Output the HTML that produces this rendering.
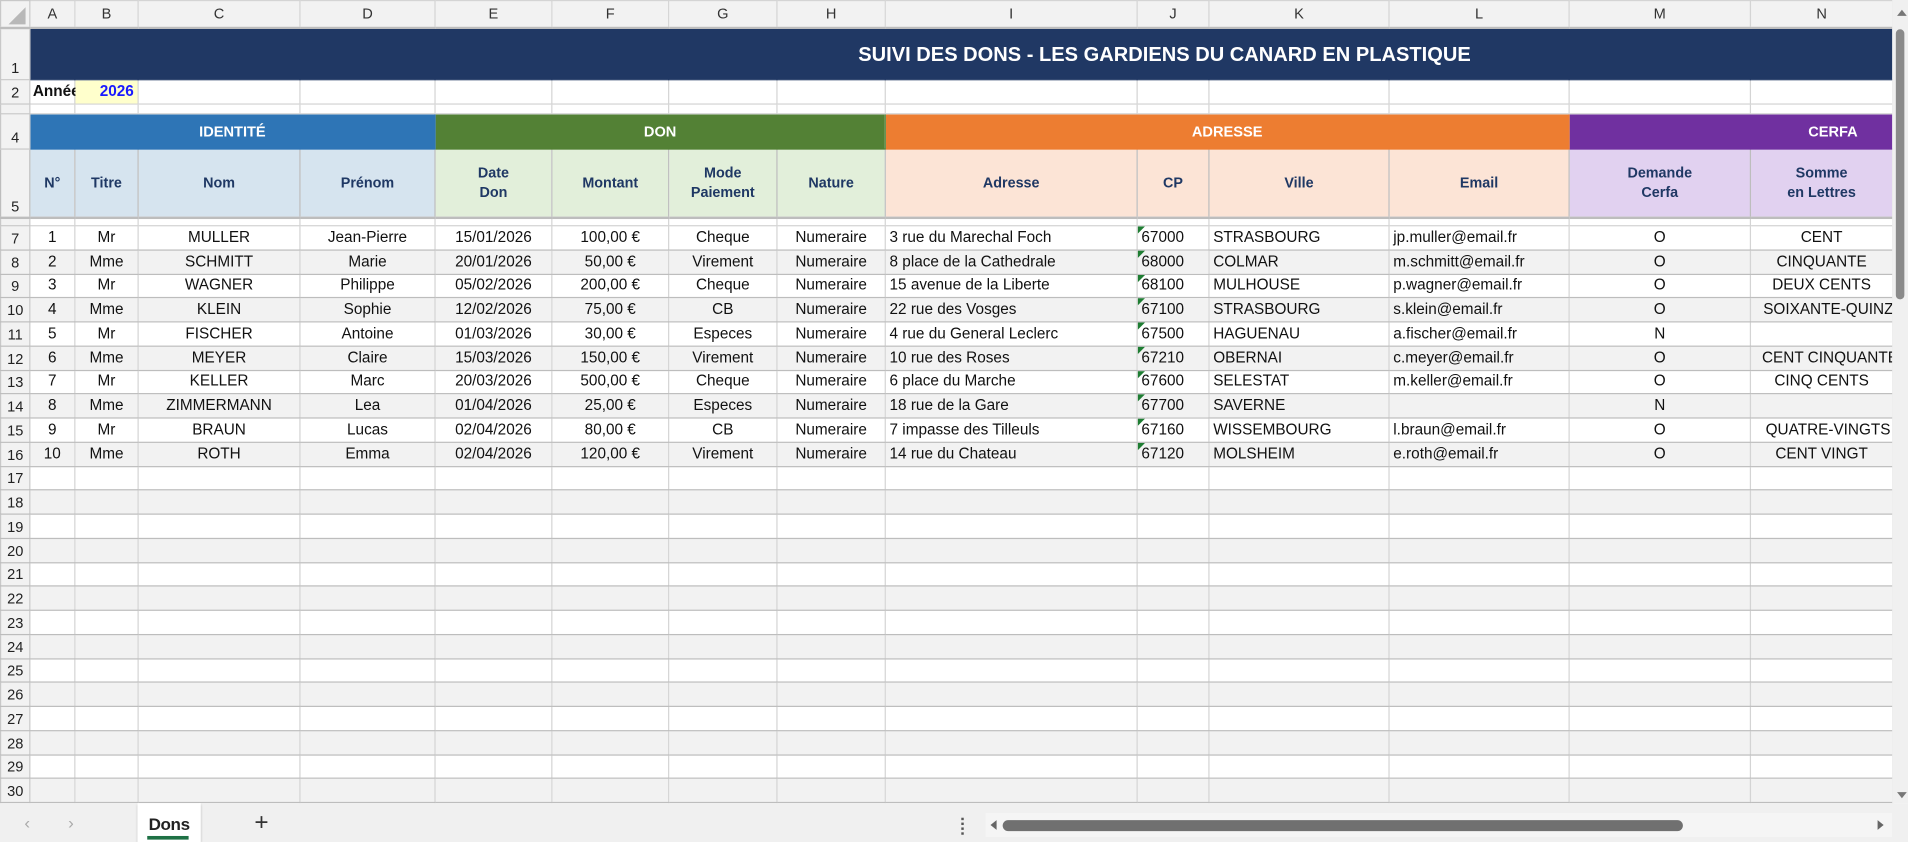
<!DOCTYPE html>
<html><head><meta charset="utf-8">
<style>
*{margin:0;padding:0;box-sizing:border-box}
html,body{width:1908px;height:842px;overflow:hidden;background:#fff}
#w{position:absolute;left:0;top:0;width:1568px;height:692px;transform:scale(1.21684);transform-origin:0 0;font-family:"Liberation Sans",Arial,sans-serif;overflow:hidden;background:#fff}
table{border-collapse:collapse;table-layout:fixed;position:absolute;left:0;top:0;width:1555px}
td{border:1px solid #d4d4d4;font-size:12.6px;color:#111;white-space:nowrap;overflow:hidden;padding:0 3px;text-align:center;height:19.75px;line-height:17px}
td.rh{background:#f2f2f2;color:#222;font-size:12px;text-align:center;padding:0;border-color:#c8c8c8;vertical-align:bottom}
tr.ch td{background:#f2f2f2;height:22px;font-size:12px;color:#333;border-bottom:2px solid #bdbdbd;vertical-align:middle}
tr.g td{background:#f2f2f2}
tr.d td{border-top:1px solid #bdbdbd;border-bottom:1px solid #bdbdbd}
tr.z td{font-size:0;line-height:0;padding:0;height:8px}
tr.z6 td{height:7px}
td.l{text-align:left}
tr.t td{background:#203864;border-color:#203864;height:43px}
tr.t td.rh{background:#f2f2f2;border-color:#c8c8c8}
tr.s td{height:29px;color:#fff;font-weight:bold;font-size:12px}
tr.h td{height:56px;font-weight:bold;font-size:11.8px;color:#1f3864;line-height:16px;border-color:#bdbdbd;border-bottom:2px solid #bdbdbd}
.b1{background:#d6e4ef}.b2{background:#e2efda}.b3{background:#fce4d6}.b4{background:#e1d1f0}
.tri{position:relative}
.tri:before{content:"";position:absolute;left:0;top:0;border-top:6px solid #1e7d32;border-right:6px solid transparent}
</style></head><body><div id="w">
<table>
<colgroup><col style="width:24px"><col style="width:37px"><col style="width:52px"><col style="width:133px"><col style="width:111px"><col style="width:96px"><col style="width:96px"><col style="width:89px"><col style="width:89px"><col style="width:207px"><col style="width:59px"><col style="width:148px"><col style="width:148px"><col style="width:149px"><col style="width:117px"></colgroup>
<tr class="ch"><td class="rh" style="background:#f2f2f2;vertical-align:middle"><div style="width:0;height:0;border-left:14px solid transparent;border-bottom:14px solid #b8b8b8;margin:4px 0 0 6px"></div></td><td>A</td><td>B</td><td>C</td><td>D</td><td>E</td><td>F</td><td>G</td><td>H</td><td>I</td><td>J</td><td>K</td><td>L</td><td>M</td><td>N</td></tr>
<tr class="t"><td class="rh">1</td><td colspan="14" style="position:relative;overflow:visible"><div style="position:absolute;left:0;width:1864px;top:0;height:43px;line-height:43px;text-align:center;color:#fff;font-weight:bold;font-size:16.5px">SUIVI DES DONS - LES GARDIENS DU CANARD EN PLASTIQUE</div></td></tr>
<tr><td class="rh" style="height:20px">2</td><td class="l" style="font-weight:bold;overflow:visible;padding-left:2px">Année</td><td style="background:#ffffcc;color:#1a1aff;font-weight:bold;text-align:right;position:relative">2026</td><td></td><td></td><td></td><td></td><td></td><td></td><td></td><td></td><td></td><td></td><td></td><td></td></tr>
<tr class="z"><td class="rh"></td><td></td><td></td><td></td><td></td><td></td><td></td><td></td><td></td><td></td><td></td><td></td><td></td><td></td><td></td></tr>
<tr class="s"><td class="rh" style="color:#222;font-weight:normal">4</td><td colspan="4" style="background:#2e75b6;border-color:#2e75b6">IDENTITÉ</td><td colspan="4" style="background:#538135;border-color:#538135">DON</td><td colspan="4" style="background:#ed7d31;border-color:#ed7d31">ADRESSE</td><td colspan="2" style="background:#7030a0;border-color:#7030a0;position:relative"><span style="position:absolute;left:196px;top:6px">CERFA</span></td></tr>
<tr class="h"><td class="rh" style="color:#222;font-weight:normal;font-size:12px">5</td><td class="b1">N°</td><td class="b1">Titre</td><td class="b1">Nom</td><td class="b1">Prénom</td><td class="b2">Date<br>Don</td><td class="b2">Montant</td><td class="b2">Mode<br>Paiement</td><td class="b2">Nature</td><td class="b3">Adresse</td><td class="b3">CP</td><td class="b3">Ville</td><td class="b3">Email</td><td class="b4">Demande<br>Cerfa</td><td class="b4">Somme<br>en Lettres</td></tr>
<tr class="z z6"><td class="rh"></td><td></td><td></td><td></td><td></td><td></td><td></td><td></td><td></td><td></td><td></td><td></td><td></td><td></td><td></td></tr>
<tr class="d"><td class="rh">7</td><td>1</td><td>Mr</td><td>MULLER</td><td>Jean-Pierre</td><td>15/01/2026</td><td>100,00 €</td><td>Cheque</td><td>Numeraire</td><td class="l">3 rue du Marechal Foch</td><td class="l tri">67000</td><td class="l">STRASBOURG</td><td class="l">jp.muller@email.fr</td><td>O</td><td>CENT</td></tr>
<tr class="d g"><td class="rh">8</td><td>2</td><td>Mme</td><td>SCHMITT</td><td>Marie</td><td>20/01/2026</td><td>50,00 €</td><td>Virement</td><td>Numeraire</td><td class="l">8 place de la Cathedrale</td><td class="l tri">68000</td><td class="l">COLMAR</td><td class="l">m.schmitt@email.fr</td><td>O</td><td>CINQUANTE</td></tr>
<tr class="d"><td class="rh">9</td><td>3</td><td>Mr</td><td>WAGNER</td><td>Philippe</td><td>05/02/2026</td><td>200,00 €</td><td>Cheque</td><td>Numeraire</td><td class="l">15 avenue de la Liberte</td><td class="l tri">68100</td><td class="l">MULHOUSE</td><td class="l">p.wagner@email.fr</td><td>O</td><td>DEUX CENTS</td></tr>
<tr class="d g"><td class="rh">10</td><td>4</td><td>Mme</td><td>KLEIN</td><td>Sophie</td><td>12/02/2026</td><td>75,00 €</td><td>CB</td><td>Numeraire</td><td class="l">22 rue des Vosges</td><td class="l tri">67100</td><td class="l">STRASBOURG</td><td class="l">s.klein@email.fr</td><td>O</td><td style="text-align:left;padding-left:10px">SOIXANTE-QUINZE</td></tr>
<tr class="d"><td class="rh">11</td><td>5</td><td>Mr</td><td>FISCHER</td><td>Antoine</td><td>01/03/2026</td><td>30,00 €</td><td>Especes</td><td>Numeraire</td><td class="l">4 rue du General Leclerc</td><td class="l tri">67500</td><td class="l">HAGUENAU</td><td class="l">a.fischer@email.fr</td><td>N</td><td></td></tr>
<tr class="d g"><td class="rh">12</td><td>6</td><td>Mme</td><td>MEYER</td><td>Claire</td><td>15/03/2026</td><td>150,00 €</td><td>Virement</td><td>Numeraire</td><td class="l">10 rue des Roses</td><td class="l tri">67210</td><td class="l">OBERNAI</td><td class="l">c.meyer@email.fr</td><td>O</td><td style="text-align:left;padding-left:9px">CENT CINQUANTE</td></tr>
<tr class="d"><td class="rh">13</td><td>7</td><td>Mr</td><td>KELLER</td><td>Marc</td><td>20/03/2026</td><td>500,00 €</td><td>Cheque</td><td>Numeraire</td><td class="l">6 place du Marche</td><td class="l tri">67600</td><td class="l">SELESTAT</td><td class="l">m.keller@email.fr</td><td>O</td><td>CINQ CENTS</td></tr>
<tr class="d g"><td class="rh">14</td><td>8</td><td>Mme</td><td>ZIMMERMANN</td><td>Lea</td><td>01/04/2026</td><td>25,00 €</td><td>Especes</td><td>Numeraire</td><td class="l">18 rue de la Gare</td><td class="l tri">67700</td><td class="l">SAVERNE</td><td class="l"></td><td>N</td><td></td></tr>
<tr class="d"><td class="rh">15</td><td>9</td><td>Mr</td><td>BRAUN</td><td>Lucas</td><td>02/04/2026</td><td>80,00 €</td><td>CB</td><td>Numeraire</td><td class="l">7 impasse des Tilleuls</td><td class="l tri">67160</td><td class="l">WISSEMBOURG</td><td class="l">l.braun@email.fr</td><td>O</td><td style="text-align:left;padding-left:12px">QUATRE-VINGTS</td></tr>
<tr class="d g"><td class="rh">16</td><td>10</td><td>Mme</td><td>ROTH</td><td>Emma</td><td>02/04/2026</td><td>120,00 €</td><td>Virement</td><td>Numeraire</td><td class="l">14 rue du Chateau</td><td class="l tri">67120</td><td class="l">MOLSHEIM</td><td class="l">e.roth@email.fr</td><td>O</td><td>CENT VINGT</td></tr>
<tr class="d"><td class="rh">17</td><td></td><td></td><td></td><td></td><td></td><td></td><td></td><td></td><td></td><td></td><td></td><td></td><td></td><td></td></tr>
<tr class="d g"><td class="rh">18</td><td></td><td></td><td></td><td></td><td></td><td></td><td></td><td></td><td></td><td></td><td></td><td></td><td></td><td></td></tr>
<tr class="d"><td class="rh">19</td><td></td><td></td><td></td><td></td><td></td><td></td><td></td><td></td><td></td><td></td><td></td><td></td><td></td><td></td></tr>
<tr class="d g"><td class="rh">20</td><td></td><td></td><td></td><td></td><td></td><td></td><td></td><td></td><td></td><td></td><td></td><td></td><td></td><td></td></tr>
<tr class="d"><td class="rh">21</td><td></td><td></td><td></td><td></td><td></td><td></td><td></td><td></td><td></td><td></td><td></td><td></td><td></td><td></td></tr>
<tr class="d g"><td class="rh">22</td><td></td><td></td><td></td><td></td><td></td><td></td><td></td><td></td><td></td><td></td><td></td><td></td><td></td><td></td></tr>
<tr class="d"><td class="rh">23</td><td></td><td></td><td></td><td></td><td></td><td></td><td></td><td></td><td></td><td></td><td></td><td></td><td></td><td></td></tr>
<tr class="d g"><td class="rh">24</td><td></td><td></td><td></td><td></td><td></td><td></td><td></td><td></td><td></td><td></td><td></td><td></td><td></td><td></td></tr>
<tr class="d"><td class="rh">25</td><td></td><td></td><td></td><td></td><td></td><td></td><td></td><td></td><td></td><td></td><td></td><td></td><td></td><td></td></tr>
<tr class="d g"><td class="rh">26</td><td></td><td></td><td></td><td></td><td></td><td></td><td></td><td></td><td></td><td></td><td></td><td></td><td></td><td></td></tr>
<tr class="d"><td class="rh">27</td><td></td><td></td><td></td><td></td><td></td><td></td><td></td><td></td><td></td><td></td><td></td><td></td><td></td><td></td></tr>
<tr class="d g"><td class="rh">28</td><td></td><td></td><td></td><td></td><td></td><td></td><td></td><td></td><td></td><td></td><td></td><td></td><td></td><td></td></tr>
<tr class="d"><td class="rh">29</td><td></td><td></td><td></td><td></td><td></td><td></td><td></td><td></td><td></td><td></td><td></td><td></td><td></td><td></td></tr>
<tr class="d g"><td class="rh">30</td><td></td><td></td><td></td><td></td><td></td><td></td><td></td><td></td><td></td><td></td><td></td><td></td><td></td><td></td></tr>
<tr class="d"><td class="rh">31</td><td></td><td></td><td></td><td></td><td></td><td></td><td></td><td></td><td></td><td></td><td></td><td></td><td></td><td></td></tr>
</table>
<div style="position:absolute;left:1555px;top:0;width:13px;height:660px;background:#f0f0f0"></div>
<div style="position:absolute;left:1559px;top:8px;width:0;height:0;border-left:4px solid transparent;border-right:4px solid transparent;border-bottom:5px solid #777"></div>
<div style="position:absolute;left:1558px;top:24px;width:7px;height:222px;background:#8a8a8a;border-radius:4px"></div>
<div style="position:absolute;left:1559px;top:651px;width:0;height:0;border-left:4px solid transparent;border-right:4px solid transparent;border-top:5px solid #777"></div>
<div style="position:absolute;left:0;top:660px;width:1568px;height:32px;background:#f0f0f0"></div>
<div style="position:absolute;left:20px;top:668px;font-size:14px;color:#aaa">&#x2039;</div>
<div style="position:absolute;left:56px;top:668px;font-size:14px;color:#aaa">&#x203A;</div>
<div style="position:absolute;left:113px;top:660px;width:52px;height:32px;background:#fff;box-shadow:0 1px 2px rgba(0,0,0,.2);font-size:14px;font-weight:bold;color:#222;text-align:center;line-height:34px;letter-spacing:-0.3px">Dons</div>
<div style="position:absolute;left:121px;top:687px;width:34px;height:3px;background:#1e7145"></div>
<div style="position:absolute;left:209px;top:665px;font-size:20px;color:#333">+</div>
<div style="position:absolute;left:790px;top:672px;width:2px;height:14px;border-left:2px dotted #555"></div>
<div style="position:absolute;left:810px;top:668px;width:745px;height:20px;background:#f5f5f5"></div>
<div style="position:absolute;left:814px;top:674px;width:0;height:0;border-top:4px solid transparent;border-bottom:4px solid transparent;border-right:5px solid #666"></div>
<div style="position:absolute;left:824px;top:674px;width:559px;height:9px;background:#707070;border-radius:5px"></div>
<div style="position:absolute;left:1543px;top:674px;width:0;height:0;border-top:4px solid transparent;border-bottom:4px solid transparent;border-left:5px solid #666"></div>
</div></body></html>
